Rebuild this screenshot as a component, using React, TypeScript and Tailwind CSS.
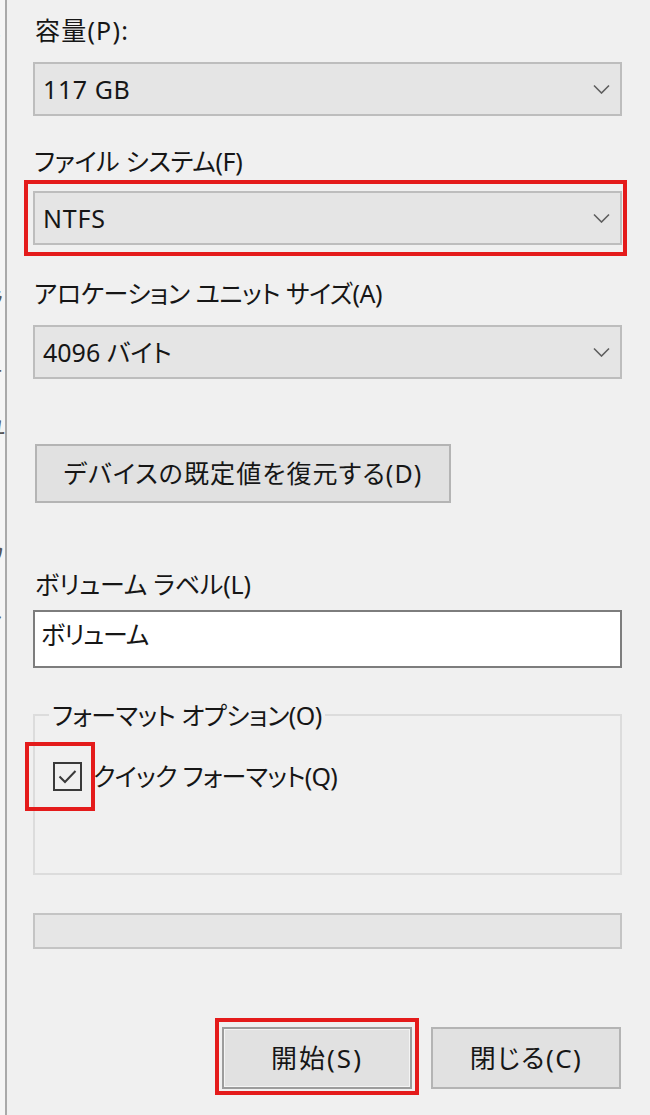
import { ReactNode } from "react";

const jp = "font-['Noto_Sans','Noto_Sans_CJK_JP',sans-serif] [font-feature-settings:'palt'] text-[#161616]";

function Label({ children, className }: { children: ReactNode; className: string }) {
  return <div className={`flex h-8 items-center text-[25px] ${className}`}>{children}</div>;
}

function Combo({ value, track }: { value: string; track: string }) {
  return (
    <div className="flex h-[54px] items-center justify-between border-2 border-[#bdbdbd] bg-[#e5e5e5] pl-[8px] pr-[10px]">
      <span className={`text-[25px] leading-none ${track}`}>{value}</span>
      <svg width="17" height="10" viewBox="0 0 17 10">
        <path d="M1 1.5 L8.5 9 L16 1.5" fill="none" stroke="#5e5e5e" strokeWidth="1.6" />
      </svg>
    </div>
  );
}

export default function App() {
  return (
    <div className={`flex h-[1115px] w-[650px] overflow-hidden bg-[#f0f0f0] ${jp}`}>
      {/* edge of the window behind, only slivers of its text show */}
      <div className="flex w-[7px] flex-col overflow-hidden border-r-2 border-[#a9a9a9] bg-[#f5f5f5] pt-[10px] text-[22px] leading-[64px] text-[#555]">
        <span className="-ml-[16px]">ノ</span>
        <span className="-ml-[16px]">)</span>
        <span className="-ml-[16px]">)</span>
        <span className="-ml-[16px]">|</span>
        <span className="-ml-[16px]">ラ</span>
        <span className="-ml-[16px]">ュ</span>
        <span className="-ml-[16px]">ユ</span>
        <span className="-ml-[16px]">(</span>
        <span className="-ml-[16px]">ワ</span>
        <span className="-ml-[16px]">ャ</span>
      </div>

      <div className="flex flex-1 flex-col pl-[26px] pr-[28px] pt-[15px]">
        <Label className="ml-[2px] tracking-[1.2px]">容量(P):</Label>
        <div className="mt-[15px]">
          <Combo value="117 GB" track="tracking-[0.6px]" />
        </div>

        <Label className="ml-[1px] mt-[30px] tracking-[-0.3px]">ファイル システム(F)</Label>
        <div className="relative mt-[13px]">
          <Combo value="NTFS" track="tracking-[0.8px]" />
          <div className="pointer-events-none absolute -bottom-[11px] -left-[9px] -right-[5px] -top-[11px] border-4 border-[#e41b1b]" />
        </div>

        <Label className="ml-[1px] mt-[33px] tracking-[-0.5px]">アロケーション ユニット サイズ(A)</Label>
        <div className="mt-[15px]">
          <Combo value="4096 バイト" track="tracking-[0px]" />
        </div>

        <button className="ml-[2px] mt-[65px] flex h-[59px] w-[416px] items-center justify-center border-2 border-[#b4b4b4] bg-[#e1e1e1] text-[25px] tracking-[1.1px]">
          デバイスの既定値を復元する(D)
        </button>

        <Label className="ml-[2px] mt-[66px] tracking-[-0.2px]">ボリューム ラベル(L)</Label>
        <div className="mt-[9px] flex h-[58px] items-center border-2 border-[#7d7d7d] bg-white pb-[8px] pl-[6px] text-[25px] tracking-[-1.2px]">
          ボリューム
        </div>

        <fieldset className="mt-[31px] h-[176px] border-2 border-[#dcdcdc]">
          <legend className="ml-[14px] px-[3px] text-[25px] leading-8 tracking-[-0.5px]">フォーマット オプション(O)</legend>
          <div className="ml-[18px] mt-[31px] flex h-[29px] items-center">
            <div className="relative h-[29px] w-[29px]">
              <div className="flex h-[29px] w-[29px] items-center justify-center border-2 border-[#3a3a3a] bg-[#f0f0f0]">
                <svg width="21" height="17" viewBox="0 0 21 17">
                  <path d="M2.5 8.5 L8 14 L18.5 3" fill="none" stroke="#3a3a3a" strokeWidth="2" />
                </svg>
              </div>
              <div className="pointer-events-none absolute -bottom-[20px] -left-[28px] -right-[13px] -top-[20px] border-4 border-[#e41b1b]" />
            </div>
            <span className="ml-[11px] text-[25px] tracking-[-0.7px]">クイック フォーマット(Q)</span>
          </div>
        </fieldset>

        <div className="mt-[38px] h-[36px] border-2 border-[#c4c4c4] bg-[#e6e6e6]" />

        <div className="mt-[78px] flex justify-end gap-[19px] pr-[1px]">
          <div className="relative">
            <button className="flex h-[62px] w-[190px] items-center justify-center border-2 border-[#9c9c9c] bg-[#e1e1e1] text-[26px] tracking-[2px] shadow-[inset_0_0_0_1px_#f4f4f4]">
              開始(S)
            </button>
            <div className="pointer-events-none absolute -bottom-[6px] -left-[7px] -right-[7px] -top-[9px] border-4 border-[#e41b1b]" />
          </div>
          <button className="flex h-[62px] w-[190px] items-center justify-center border-2 border-[#b4b4b4] bg-[#e1e1e1] text-[26px] tracking-[1.4px]">
            閉じる(C)
          </button>
        </div>
      </div>
    </div>
  );
}
